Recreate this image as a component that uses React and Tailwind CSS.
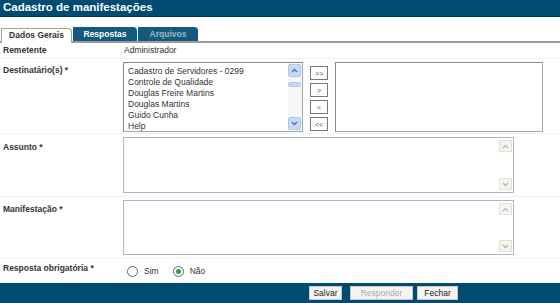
import { useState } from 'react';

const font = { fontFamily: '"Liberation Sans", Arial, sans-serif' };

const destinatarios = [
  'Cadastro de Servidores - 0299',
  'Controle de Qualidade',
  'Douglas Freire Martins',
  'Douglas Martins',
  'Guido Cunha',
  'Help',
];

function Chevron({ up, color = '#4d6fa8' }) {
  return (
    <svg width="7" height="5" viewBox="0 0 7 5">
      <path d={up ? 'M1 4 L3.5 1.5 L6 4' : 'M1 1 L3.5 3.5 L6 1'} fill="none" stroke={color} strokeWidth="1.4" />
    </svg>
  );
}

function TextArea() {
  return (
    <div className="flex w-[391px] h-full border border-[#a7b8c9] bg-white">
      <div className="flex-1" />
      <div className="w-[14px] flex flex-col justify-between py-[2px] pr-[1px]">
        <div className="h-[12px] flex items-center justify-center border border-[#e2e2da] bg-[#f5f5f0]">
          <Chevron up color="#b8b8b0" />
        </div>
        <div className="h-[12px] flex items-center justify-center border border-[#e2e2da] bg-[#f5f5f0]">
          <Chevron color="#b8b8b0" />
        </div>
      </div>
    </div>
  );
}

function Radio({ checked, label, onClick }) {
  return (
    <label className="flex items-center gap-[6px] cursor-pointer" onClick={onClick}>
      <span className="w-[11px] h-[11px] rounded-full border border-[#4b6c8f] bg-white flex items-center justify-center">
        {checked && <span className="w-[5px] h-[5px] rounded-full bg-[#2fa23a]" />}
      </span>
      <span className="text-[8.5px] text-[#333]">{label}</span>
    </label>
  );
}

export default function App() {
  const [obrigatoria, setObrigatoria] = useState(false);

  return (
    <div className="w-[560px] h-[303px] bg-white flex flex-col overflow-hidden" style={font}>
      <div className="h-[17px] bg-[#004b72] flex items-center px-[3px] border-b border-[#0a3650]">
        <span className="text-white font-bold text-[11.5px] leading-none">Cadastro de manifestações</span>
      </div>

      <div className="h-[11px]" />

      <div className="flex items-end h-[15px] pl-[1px] border-b-2 border-[#9b9b9b]">
        <div className="h-[15px] w-[71px] bg-white border border-b-0 border-[#a0a0a0] rounded-tr-[4px] flex items-center justify-center text-[8.5px] font-bold text-[#333] -mb-[2px] pb-[2px]">
          Dados Gerais
        </div>
        <div className="h-[14px] w-[64px] ml-[1px] bg-[#14597f] rounded-tr-[4px] flex items-center justify-center text-[8.5px] font-bold text-white">
          Respostas
        </div>
        <div className="h-[14px] w-[60px] ml-[1px] bg-[#14597f] rounded-tr-[4px] flex items-center justify-center text-[8.5px] font-bold text-[#9fb7c8]">
          Arquivos
        </div>
      </div>

      <div className="flex flex-col text-[8.5px] text-[#333]">
        <div className="grid grid-cols-[123px_1fr] h-[16px] items-center border-b border-[#f0f0f0]">
          <span className="pl-[3px] font-bold">Remetente</span>
          <span className="pl-[1px]">Administrador</span>
        </div>

        <div className="grid grid-cols-[123px_1fr] h-[75px] border-b border-[#f0f0f0] pt-[3px]">
          <span className="pl-[3px] pt-[2px] font-bold">Destinatário(s) *</span>
          <div className="flex gap-[7px] h-[70px]">
            <div className="w-[180px] h-full border border-[#a5a5a5] border-t-[#888] border-l-[#888] bg-white flex">
              <ul className="flex-1 pl-[4px] pt-[3px] leading-[11px]">
                {destinatarios.map((d) => (
                  <li key={d}>{d}</li>
                ))}
              </ul>
              <div className="w-[14px] flex flex-col py-[1px] pr-[1px] bg-[#f7f7f7]">
                <div className="h-[13px] bg-[#c8d9f5] border border-[#b0c6ec] rounded-[2px] flex items-center justify-center">
                  <Chevron up />
                </div>
                <div className="h-[5px] mt-[5px] bg-[#c6d8f5] border border-[#b0c6ec] rounded-[2px]" />
                <div className="flex-1" />
                <div className="h-[13px] bg-[#c8d9f5] border border-[#b0c6ec] rounded-[2px] flex items-center justify-center">
                  <Chevron />
                </div>
              </div>
            </div>
            <div className="flex flex-col gap-[3px] pt-[4px]">
              {['>>', '>', '<', '<<'].map((b) => (
                <button
                  key={b}
                  className="w-[18px] h-[14px] border border-[#777] bg-white text-[7px] text-[#555] leading-none flex items-center justify-center"
                >
                  {b}
                </button>
              ))}
            </div>
            <div className="w-[208px] h-full border border-[#a5a5a5] border-t-[#888] border-l-[#888] bg-white" />
          </div>
        </div>

        <div className="grid grid-cols-[123px_1fr] h-[63px] border-b border-[#f0f0f0] py-[3px]">
          <span className="pl-[3px] pt-[4px] font-bold">Assunto *</span>
          <TextArea />
        </div>

        <div className="grid grid-cols-[123px_1fr] h-[62px] border-b border-[#f0f0f0] py-[3px]">
          <span className="pl-[3px] pt-[3px] font-bold">Manifestação *</span>
          <TextArea />
        </div>

        <div className="grid grid-cols-[123px_1fr] h-[22px] items-center">
          <span className="pl-[3px] font-bold -mt-[4px]">Resposta obrigatória *</span>
          <div className="flex items-center gap-[14px] pl-[4px] pt-[2px]">
            <Radio label="Sim" checked={obrigatoria} onClick={() => setObrigatoria(true)} />
            <Radio label="Não" checked={!obrigatoria} onClick={() => setObrigatoria(false)} />
          </div>
        </div>
      </div>

      <div className="mt-auto h-[20px] bg-[#004b72] flex items-center pl-[309px] gap-[8px]">
        <button className="h-[14px] w-[33px] bg-[#f4f4f4] border border-[#c8c8c8] text-[8.5px] text-[#222] leading-none">
          Salvar
        </button>
        <button className="h-[14px] w-[63px] bg-[#f4f4f4] border border-[#c8c8c8] text-[8.5px] text-[#aaa] leading-none" disabled>
          Responder
        </button>
        <button className="h-[14px] w-[41px] -ml-[4px] bg-[#f4f4f4] border border-[#c8c8c8] text-[8.5px] text-[#222] leading-none">
          Fechar
        </button>
      </div>
    </div>
  );
}
